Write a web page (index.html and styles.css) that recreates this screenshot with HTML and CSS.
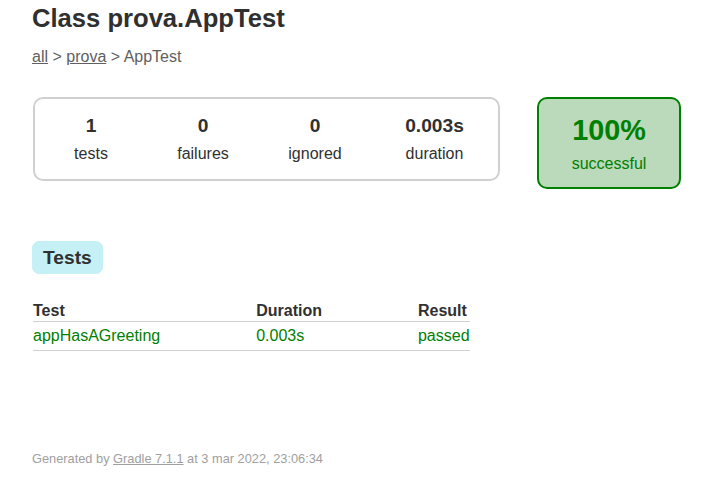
FILE: index.html
```html
<!DOCTYPE html>
<html>
<head>
<meta charset="utf-8">
<title>Test results - Class prova.AppTest</title>
<link rel="stylesheet" href="styles.css">
</head>
<body>
<div class="content">
  <h1 class="title">Class prova.AppTest</h1>
  <div class="breadcrumbs"><a href="#">all</a> &gt; <a href="#">prova</a> &gt; AppTest</div>
  <div class="summary">
    <div class="summary-group">
      <div class="info-box">
        <div class="counter">1</div>
        <p class="label">tests</p>
      </div>
      <div class="info-box">
        <div class="counter">0</div>
        <p class="label">failures</p>
      </div>
      <div class="info-box">
        <div class="counter">0</div>
        <p class="label">ignored</p>
      </div>
      <div class="info-box info-duration">
        <div class="counter">0.003s</div>
        <p class="label">duration</p>
      </div>
    </div>
    <div class="success-rate">
      <div class="percent">100%</div>
      <p class="label">successful</p>
    </div>
  </div>
  <ul class="tab-links">
    <li class="tab-link selected"><a href="#">Tests</a></li>
  </ul>
  <table class="tests-table">
    <thead>
      <tr><th>Test</th><th>Duration</th><th>Result</th></tr>
    </thead>
    <tbody>
      <tr class="success-row"><td>appHasAGreeting</td><td>0.003s</td><td>passed</td></tr>
    </tbody>
  </table>
  <div class="footer">Generated by <a href="#">Gradle 7.1.1</a> at 3 mar 2022, 23:06:34</div>
</div>
</body>
</html>
```

FILE: styles.css
```css
html, body {
  margin: 0;
  padding: 0;
  background: #ffffff;
}
body {
  font-family: "Liberation Sans", Arial, sans-serif;
  font-size: 16px;
  color: #303030;
}
a, a:visited {
  color: #303030;
}
.content {
  padding: 4px 32px 20px 32px;
}
.title {
  margin: 0;
  font-size: 25.6px;
  line-height: 29px;
  font-weight: bold;
  white-space: nowrap;
}
.breadcrumbs {
  margin-top: 15px;
  line-height: 18px;
  color: #606060;
}
.breadcrumbs a {
  color: #606060;
}
.summary {
  margin-top: 31px;
  display: flex;
  align-items: flex-start;
}
.summary-group {
  flex-shrink: 0;
  display: flex;
  border: 2px solid #d0d0d0;
  border-radius: 10px;
  margin-left: 1px;
}
.info-box {
  flex-shrink: 0;
  width: 110px;
  padding: 16px 1px;
  text-align: center;
}
.info-duration {
  width: 125px;
}
.counter {
  font-size: 19.2px;
  font-weight: bold;
  line-height: 22px;
  margin-bottom: 8px;
}
.label {
  margin: 0;
  line-height: 18px;
}
.success-rate {
  flex-shrink: 0;
  box-sizing: border-box;
  width: 144px;
  height: 92px;
  margin-left: 37px;
  border: 2px solid #008000;
  border-radius: 10px;
  background: #bbd9bb;
  color: #008000;
  text-align: center;
  padding: 15px 0 0;
}
.percent {
  font-size: 28.8px;
  font-weight: bold;
  line-height: 33px;
  margin-bottom: 8px;
}
.tab-links {
  list-style: none;
  margin: 52px 0 0 0;
  padding: 0;
  display: flex;
}
.tab-link {
  padding: 5px 10px;
  border: 1px solid #c5f0f5;
  border-radius: 7px;
  background: #c5f0f5;
}
.tab-link a {
  display: block;
  font-size: 19.2px;
  font-weight: bold;
  line-height: 21px;
  text-decoration: none;
  color: #303030;
}
.tests-table {
  margin-top: 27px;
  margin-left: 1px;
  border-collapse: collapse;
  min-width: 350px;
  border-bottom: 1px solid #d0d0d0;
}
.tests-table th {
  text-align: left;
  white-space: nowrap;
  padding: 1px 0 1px 96px;
  line-height: 18px;
  border-bottom: 1px solid #d0d0d0;
}
.tests-table td {
  white-space: nowrap;
  padding: 5px 0 5px 96px;
  line-height: 18px;
}
.tests-table th:first-child,
.tests-table td:first-child {
  padding-left: 0;
}
.success-row td {
  color: #008000;
}
.footer {
  margin-top: 100px;
  font-size: 12.8px;
  line-height: 15px;
  color: #a0a0a0;
  white-space: nowrap;
}
.footer a {
  color: #a0a0a0;
}
```
